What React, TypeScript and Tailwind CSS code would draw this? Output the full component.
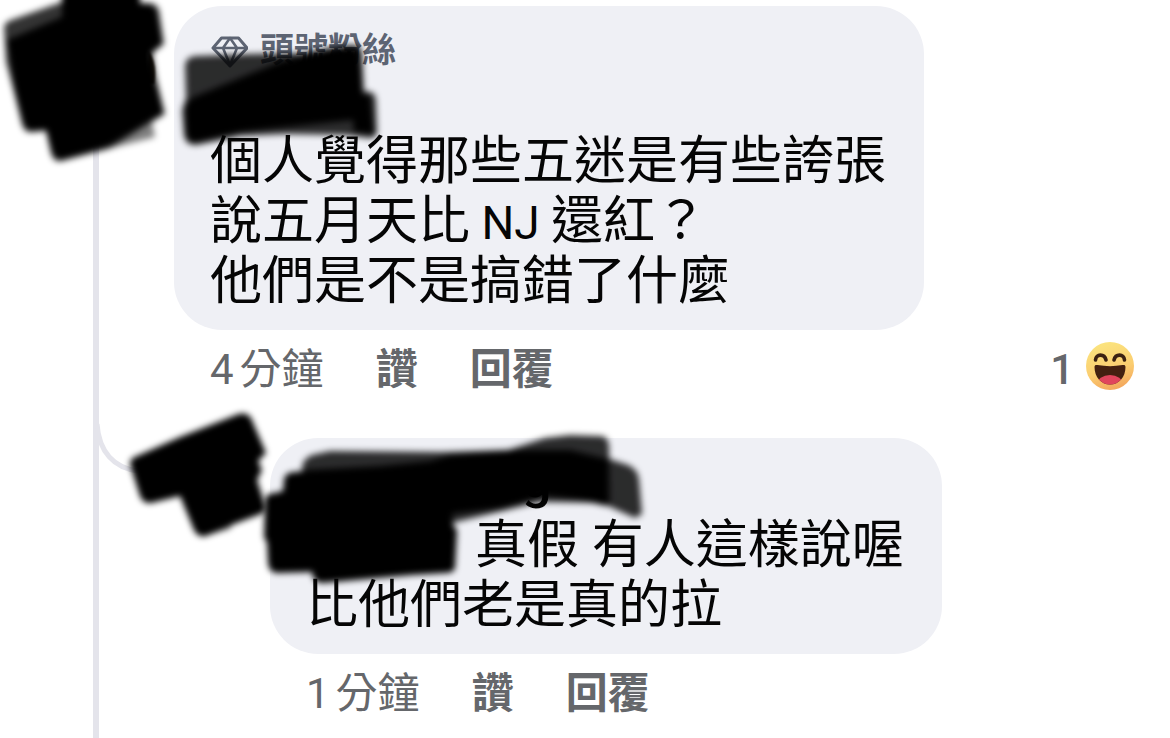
import type { ReactNode } from 'react'

function Diamond() {
  return (
    <svg viewBox="0 0 38 34" className="h-[34px] w-[38px]" fill="none" stroke="currentColor" strokeWidth="3" strokeLinejoin="round" aria-hidden="true">
      <path d="M11.500 2h17l8.500 10L20 30 3 12z" />
      <path d="M3 12h34M20 2l-7 10 7 17 7-17z" strokeWidth="2.600" />
    </svg>
  )
}

function HahaFace() {
  return (
    <svg viewBox="0 0 48 48" className="size-12" role="img" aria-label="哈">
      <defs>
        <linearGradient id="face" x1="0.3" y1="0" x2="0.6" y2="1">
          <stop offset="0" stopColor="#fbe57f" />
          <stop offset="0.6" stopColor="#fbcd70" />
          <stop offset="1" stopColor="#f3a65c" />
        </linearGradient>
        <clipPath id="mouth">
          <path d="M8.500 25c0-1.700 1-2.300 2.800-2 9 1.500 16.500 1.500 25.400 0 1.800-.3 2.800.3 2.800 2 0 10-6.500 17.500-15.500 17.500S8.500 35 8.500 25z" />
        </clipPath>
      </defs>
      <circle cx="24" cy="24" r="24" fill="url(#face)" />
      <g clipPath="url(#mouth)">
        <path d="M0 0h48v48H0z" fill="#442010" />
        <ellipse cx="24" cy="42" rx="13" ry="9" fill="#e0455c" />
      </g>
      <path d="M9.500 18c.5-6.500 9-6.500 10.500 0M28 18c1.500-6.500 10-6.500 10.500 0" fill="none" stroke="#3b2111" strokeWidth="3.600" strokeLinecap="round" />
    </svg>
  )
}

function AuthorAvatar() {
  return (
    <svg viewBox="0 6 174 164" className="relative h-[164px] w-[174px] shrink-0 overflow-visible" aria-hidden="true">
      <path d="M148 50Q158 64 154 84H146z" fill="#2e261a" className="blur-[1px]" />
      <g className="blur-[3px]">
        <path d="M4 27Q5 22 11 20L62 2V-8H140V3H150Q157 4 159 10L164 44 152 53 156 78 165 114 108 149 62 161Q54 163 51 154L46 131 34 132Q25 134 22 125L14 92 6 62z" fill="#000" opacity="0.800" />
        <path d="M7 40L62 17V-8H140V4Q152 3 156 10L162 43 152 53 155 78 163 113 106 147 62 159Q55 159 52 150L46 129 31 130Q25 129 23 120L15 90z" fill="#000" />
        <path d="M110 145L152 122 155 137 108 149z" fill="#000" opacity="0.500" />
      </g>
    </svg>
  )
}

function ReplyAvatar() {
  return (
    <svg viewBox="99 438 171 100" className="relative h-[100px] w-[171px] shrink-0 overflow-visible" aria-hidden="true">
      <path d="M97 424C99 452 114 468 138 471" fill="none" stroke="#e4e4eb" strokeWidth="5" />
      <g className="blur-[3px]">
        <path d="M130 464Q130 458 137 456L180 437 236 415Q246 411 251 418L266 453 258 461 262 470 257 480 266 508Q265 513 258 515L234 524 206 536Q198 538 194 530L180 496 151 503Q143 504 140 496z" />
        <path d="M206 530L233 522 230 529 208 535z" opacity="0.500" />
      </g>
    </svg>
  )
}

function AuthorNameMark() {
  return (
    <svg viewBox="174 6 210 146" className="absolute top-0 left-0 h-[146px] w-[210px] overflow-visible" aria-hidden="true">
      <g className="blur-[3px]">
        <path d="M185 65Q186 57 195 56L250 54 300 53 340 46 355 45Q362 46 362 54L364 91 370 92Q376 93 376 101L377 132Q376 139 368 138L345 135 285 134 240 136 197 145Q186 146 184 136L182 110 186 98z" opacity="0.820" />
        <path d="M185 108Q186 100 196 96L235 80 282 61 330 49 350 47Q359 48 360 55L362 94 370 95 374 134 354 132 353 120 240 132 196 142Q187 142 186 132z" />
      </g>
    </svg>
  )
}

function ReplyNameMark() {
  return (
    <svg viewBox="270 438 372 146" className="absolute top-0 left-0 h-[146px] w-[372px] overflow-visible" aria-hidden="true">
      <g className="blur-[3px]">
        <path d="M302 472Q301 459 312 455L330 451 440 452 508 450 545 438 570 435 600 436Q609 436 609 448L610 503 540 502 452 523 300 500z" opacity="0.820" />
        <path d="M606 458L628 465Q638 469 639 480L642 514 635 518 606 505z" opacity="0.820" />
        <path d="M284 480Q285 472 295 472L304 471 306 470 380 466 430 461 450 455 510 450 570 450 607 459 607 506 580 500 545 496 503 508 452 514 453 525 457 530 455 568Q454 573 445 573L412 575 322 583Q313 583 312 572L277 573Q268 572 268 562L267 542 264 538 265 500Q266 493 275 493L283 491z" />
      </g>
    </svg>
  )
}

function Bubble({ children }: { children: ReactNode }) {
  return (
    <div className="relative w-fit rounded-[48px] bg-[#eff0f5] pr-[38px] pb-[18px] pl-9 text-[52px] leading-[60px] text-[#050505]">
      {children}
    </div>
  )
}

function Actions({ minutes }: { minutes: number }) {
  return (
    <div className="flex gap-[52px]">
      <span className="flex gap-1.5">
        <span>{minutes}</span>
        <span>分鐘</span>
      </span>
      <button type="button" className="font-bold">讚</button>
      <button type="button" className="font-bold">回覆</button>
    </div>
  )
}

const footer = 'mt-3 flex h-14 items-start justify-between pr-9 pl-9 text-[42px] leading-14 text-[#65676b]'

export default function App() {
  return (
    <main className="relative min-h-screen overflow-hidden bg-white pt-1.5 font-['Roboto','Noto_Sans_CJK_TC',sans-serif]">
      {/* thread line running down from the author's avatar */}
      <div className="absolute top-[130px] bottom-0 left-[93px] w-1.5 bg-[#e4e4eb]" />

      <article className="flex items-start">
        <AuthorAvatar />
        <div className="min-w-0 flex-1">
          <Bubble>
            <div className="flex h-16 items-end gap-3 pt-6 text-[34px] leading-10 font-bold text-[#5d6473]">
              <Diamond />
              <span>頭號粉絲</span>
            </div>
            <div className="h-[62px]" />
            <p>
              個人覺得那些五迷是有些誇張
              <br />
              說五月天比<span className="text-[46px] leading-none"> NJ </span>還紅？
              <br />
              他們是不是搞錯了什麼
            </p>
            <AuthorNameMark />
          </Bubble>
          <div className={footer}>
            <Actions minutes={4} />
            <div className="flex items-start gap-3">
              <span className="font-medium">1</span>
              <HahaFace />
            </div>
          </div>
        </div>
      </article>

      <article className="mt-10 flex items-start pl-[99px]">
        <ReplyAvatar />
        <div className="min-w-0 flex-1">
          <Bubble>
            <div className="h-[78px] pt-3 pl-[216px] font-medium">g</div>
            <p>
              <span className="inline-block w-39" /> 真假 有人這樣說喔
              <br />
              比他們老是真的拉
            </p>
            <ReplyNameMark />
          </Bubble>
          <div className={footer}>
            <Actions minutes={1} />
          </div>
        </div>
      </article>
    </main>
  )
}
